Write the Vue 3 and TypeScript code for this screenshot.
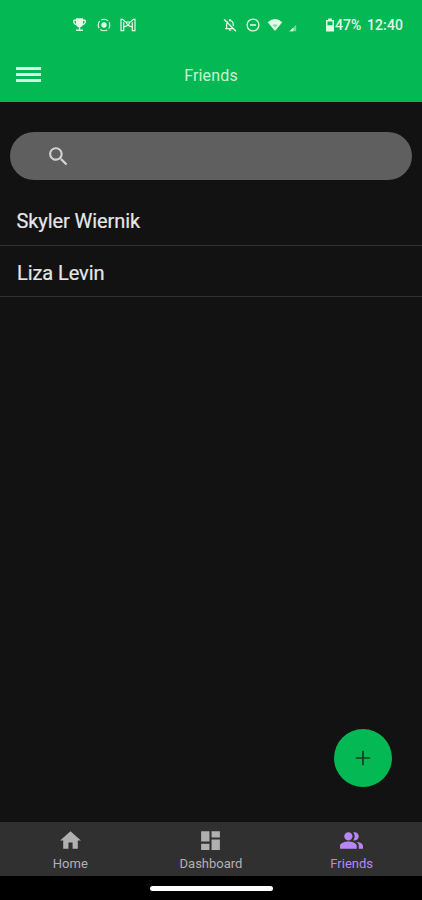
<script setup lang="ts">
import { ref } from 'vue'

interface Tab {
  label: string
  paths: string[]
}

const friends = ref<string[]>(['Skyler Wiernik', 'Liza Levin'])
const active = ref('Friends')
const tabs: Tab[] = [
  { label: 'Home', paths: ['M10 20v-6h4v6h5v-8h3L12 3 2 12h3v8z'] },
  { label: 'Dashboard', paths: ['M3 13h8V3H3v10zm0 8h8v-6H3v6zm10 0h8V11h-8v10zm0-18v6h8V3h-8z'] },
  {
    label: 'Friends',
    paths: [
      'M16.67 13.13C18.04 14.06 19 15.32 19 17v3h4v-3c0-2.18-3.57-3.47-6.33-3.87z',
      'M15 12c2.21 0 4-1.79 4-4s-1.79-4-4-4c-.47 0-.91.1-1.33.24C14.5 5.27 15 6.58 15 8s-.5 2.73-1.33 3.76c.42.14.86.24 1.33.24z',
      'M9 12c2.21 0 4-1.79 4-4s-1.79-4-4-4-4 1.79-4 4 1.79 4 4 4zM9 13c-2.67 0-8 1.34-8 4v3h16v-3c0-2.66-5.33-4-8-4z',
    ],
  },
]
</script>

<template>
  <div class="screen">
    <header class="top">
      <div class="status">
        <div class="notifications">
          <svg class="trophy" viewBox="0 0 24 24"><path d="M19 5h-2V3H7v2H5c-1.1 0-2 .9-2 2v1c0 2.55 1.92 4.63 4.39 4.94.63 1.5 1.98 2.63 3.61 2.96V19H7v2h10v-2h-4v-3.1c1.63-.33 2.98-1.46 3.61-2.96C19.08 12.63 21 10.55 21 8V7c0-1.1-.9-2-2-2zM5 8V7h2v3.82C5.84 10.4 5 9.3 5 8zm14 0c0 1.3-.84 2.4-2 2.82V7h2v1z" /></svg>
          <svg class="record" viewBox="0 0 14 14"><circle cx="7" cy="7" r="5.8" fill="none" stroke="currentColor" stroke-width="1.1" stroke-dasharray="7.4 1.71" stroke-dashoffset="3.7" /><circle cx="7" cy="7" r="2.7" /></svg>
          <svg class="cast" viewBox="0 0 16 14"><path d="M1 1.3v11.4h2.7V9.2L8 7.1l4.3 2.1v3.5H15V1.3h-1.7L10.6 4H5.4L2.7 1.3zM3.7 4.2v5M12.3 4.2v5M5.8 4l2.2 3 2.2-3" fill="none" stroke="currentColor" stroke-width="1.2" /></svg>
        </div>
        <div class="system">
          <svg class="bell" viewBox="0 0 14 14"><path d="M3.6 10.3V6.2Q3.7 4.5 5 3.4M6 2.8Q7 2.3 8.1 2.8Q10.2 3.7 10.3 6.2V8M2.2 10.5h8.3M1 1.3l12 12" fill="none" stroke="currentColor" stroke-width="1.25" /><path d="M6.2 1h1.6v2H6.2zM5.7 11.3h2.6Q8 12.9 7 12.9T5.7 11.3z" /></svg>
          <svg class="dnd" viewBox="0 0 14 14"><path d="M12.9 7A5.9 5.9 0 1 1 1.1 7a5.9 5.9 0 0 1 11.8 0zM4 7h6" fill="none" stroke="currentColor" stroke-width="1.3" /></svg>
          <svg class="wifi" viewBox="0 0 16 14"><path d="M.7 4.2Q8-2 15.3 4.2L8 13z" /><path class="gap" d="M5.4 6.9Q8 5.4 10.6 6.9L8 9.8z" /></svg>
          <svg class="signal" viewBox="0 0 8 8"><path d="M7.2.8v6.5H.5z" opacity=".5" /><path d="M4.3 3.7v3.6H.5z" /></svg>
          <svg class="battery" viewBox="0 0 10 14"><path fill-rule="evenodd" d="M3.2.5h3.6V2H9v11.4H1V2h2.2zM2.5 3.5v3.8h5V3.5z" /></svg>
          <span class="percent">47%</span>
          <span class="time">12:40</span>
        </div>
      </div>
      <div class="appbar">
        <button class="menu" aria-label="Menu"><i /><i /><i /></button>
        <h1>Friends</h1>
      </div>
    </header>

    <main>
      <div class="search">
        <svg viewBox="0 0 24 24"><path d="M15.5 14h-.79l-.28-.27C15.41 12.59 16 11.11 16 9.5 16 5.91 13.09 3 9.5 3S3 5.91 3 9.5 5.91 16 9.5 16c1.61 0 3.09-.59 4.23-1.57l.27.28v.79l5 4.99L20.49 19l-4.99-5zm-6 0C7.01 14 5 11.99 5 9.5S7.01 5 9.5 5 14 7.01 14 9.5 11.99 14 9.5 14z" /></svg>
      </div>
      <ul>
        <li v-for="friend in friends" :key="friend"><span>{{ friend }}</span></li>
      </ul>
      <button class="fab" aria-label="Add friend">
        <svg viewBox="0 0 16 16"><path d="M8 .8v14.4M.8 8h14.4" /></svg>
      </button>
    </main>

    <nav>
      <button v-for="tab in tabs" :key="tab.label" class="tab" :class="{ active: tab.label === active }" @click="active = tab.label">
        <svg viewBox="0 0 24 24"><path v-for="d in tab.paths" :key="d" :d="d" /></svg>
        <span>{{ tab.label }}</span>
      </button>
    </nav>
    <div class="gesture"><i /></div>
  </div>
</template>

<style>
body {
  background: #121212;
}
</style>

<style scoped>
* {
  box-sizing: border-box;
}
.screen {
  display: flex;
  flex-direction: column;
  height: 900px;
  background: #121212;
  font-family: Roboto, "Liberation Sans", sans-serif;
}
svg {
  display: block;
  flex: none;
  fill: currentColor;
}
button {
  border: 0;
  padding: 0;
  background: none;
  font: inherit;
}
.top {
  height: 102px;
  background: #04b853;
  color: #e2f9e8;
}
.status {
  display: flex;
  justify-content: space-between;
  height: 49px;
  padding: 0 17px 0 71px;
}
.notifications,
.system {
  display: flex;
  align-items: center;
}
.trophy {
  width: 17px;
  height: 17px;
}
.record {
  width: 14px;
  height: 14px;
  margin-left: 9px;
}
.cast {
  width: 16px;
  height: 14px;
  margin-left: 9px;
}
.bell {
  width: 14px;
  height: 14px;
}
.dnd {
  width: 14px;
  height: 14px;
  margin-left: 9px;
}
.wifi {
  width: 16px;
  height: 14px;
  margin-left: 7px;
}
.gap {
  fill: #8cdcae;
}
.signal {
  width: 8px;
  height: 8px;
  margin: 7px 0 0 6px;
}
.battery {
  width: 10px;
  height: 14px;
  margin-left: 28px;
}
.percent,
.time {
  font-size: 14px;
  font-weight: 500;
  line-height: 20px;
}
.percent {
  width: 32px;
}
.time {
  width: 38px;
  letter-spacing: 0.1px;
}
.appbar {
  display: grid;
  grid-template-columns: 44px 1fr 44px;
  align-items: center;
  height: 53px;
}
.menu {
  display: flex;
  flex-direction: column;
  gap: 3px;
  width: 25px;
  margin: 0 0 2px 16px;
}
.menu i {
  height: 3px;
  background: #d3f7dd;
}
h1 {
  margin: 0;
  font-size: 16px;
  font-weight: 400;
  line-height: 20px;
  letter-spacing: 0.15px;
  text-align: center;
  color: #c8f3d4;
}
main {
  flex: 1;
  position: relative;
  padding-top: 30px;
}
.search {
  display: flex;
  align-items: center;
  height: 48px;
  margin: 0 10px;
  padding-left: 36px;
  border-radius: 24px;
  background: #5f5f5f;
  color: #d2d2d2;
}
.search svg {
  width: 25px;
  height: 25px;
}
ul {
  margin: 15px 0 0;
  padding: 0;
  list-style: none;
}
li {
  display: flex;
  align-items: center;
  height: 51px;
  padding: 4px 17px 0;
  border-bottom: 1px solid #303030;
  color: #e6e6e6;
  font-size: 20px;
  line-height: 24px;
  letter-spacing: -0.08px;
  -webkit-text-stroke: 0.2px currentColor;
}
li:first-child {
  padding: 2px 16.5px 0;
}
.fab {
  position: absolute;
  right: 30px;
  bottom: 35px;
  display: grid;
  place-items: center;
  width: 58px;
  height: 58px;
  border-radius: 50%;
  background: #04b853;
  color: #123f24;
}
.fab svg {
  width: 16px;
  height: 16px;
  stroke: currentColor;
  stroke-width: 1.7;
}
nav {
  display: grid;
  grid-template-columns: repeat(3, 1fr);
  height: 54px;
  background: #303030;
}
.tab {
  display: flex;
  flex-direction: column;
  align-items: center;
  padding-top: 6px;
  color: #b0b0b0;
  font-size: 13px;
  line-height: 16px;
}
.tab svg {
  width: 25px;
  height: 25px;
  margin-bottom: 3px;
}
.active {
  color: #b887f5;
}
.gesture {
  display: flex;
  justify-content: center;
  height: 24px;
  padding-top: 10px;
  background: #000;
}
.gesture i {
  width: 123px;
  height: 5px;
  border-radius: 3px;
  background: #fff;
}
</style>
